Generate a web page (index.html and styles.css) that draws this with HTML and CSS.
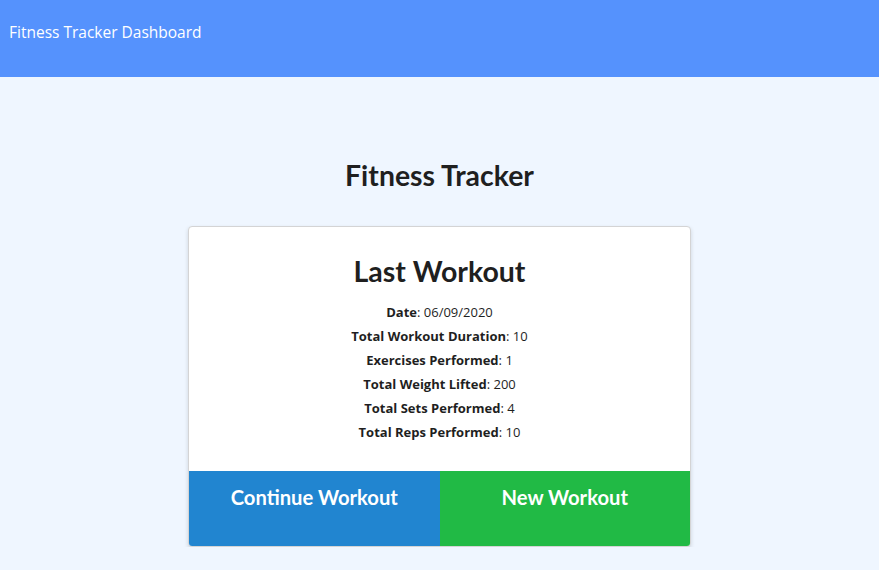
FILE: index.html
```html
<!DOCTYPE html>
<html lang="en">
<head>
<meta charset="utf-8">
<title>Fitness Tracker</title>
<link rel="stylesheet" href="styles.css">
</head>
<body>
<header class="navbar">Fitness Tracker Dashboard</header>
<main class="main">
  <h1 class="title">Fitness Tracker</h1>
  <section class="card">
    <div class="card-content">
      <h2 class="card-title">Last Workout</h2>
      <div class="stats">
        <p class="stat"><strong>Date</strong>: 06/09/2020</p>
        <p class="stat"><strong>Total Workout Duration</strong>: 10</p>
        <p class="stat"><strong>Exercises Performed</strong>: 1</p>
        <p class="stat"><strong>Total Weight Lifted</strong>: 200</p>
        <p class="stat"><strong>Total Sets Performed</strong>: 4</p>
        <p class="stat"><strong>Total Reps Performed</strong>: 10</p>
      </div>
    </div>
    <div class="buttons">
      <a class="btn btn-blue" href="#">Continue Workout</a>
      <a class="btn btn-green" href="#">New Workout</a>
    </div>
  </section>
</main>
</body>
</html>
```

FILE: styles.css
```css
html, body {
  margin: 0;
  padding: 0;
}
body {
  background: #eff6ff;
  font-family: Lato, "Open Sans", sans-serif;
  color: #1f1f1f;
}
.navbar {
  height: 77px;
  box-sizing: border-box;
  background: #5592fd;
  color: #ffffff;
  font-family: "Open Sans", "Noto Sans", sans-serif;
  font-size: 15.5px;
  line-height: 20px;
  padding: 22px 9px 0;
}
.main {
  display: flex;
  flex-direction: column;
  align-items: center;
}
.title {
  margin: 81px 0 34px;
  font-family: Lato, sans-serif;
  font-weight: 700;
  font-size: 28.4px;
  line-height: 34px;
  color: #1f1f1f;
}
.card {
  width: 503px;
  box-sizing: border-box;
  background: #ffffff;
  border: 1px solid #d4d4d5;
  border-radius: 4px;
  box-shadow: 0 2px 4px 0 rgba(0, 0, 0, 0.14);
  overflow: hidden;
}
.card-content {
  padding: 27px 16px 27px;
  text-align: center;
}
.card-title {
  margin: 0 0 12px;
  font-family: Lato, sans-serif;
  font-weight: 700;
  font-size: 28.5px;
  line-height: 34px;
  color: #1f1f1f;
}
.stats {
  display: flex;
  flex-direction: column;
}
.stat {
  margin: 0;
  font-family: "Open Sans", "Noto Sans", sans-serif;
  font-size: 13px;
  line-height: 24px;
  color: #1f1f1f;
}
.stat strong {
  font-weight: 700;
}
.buttons {
  display: grid;
  grid-template-columns: 1fr 1fr;
  height: 75px;
}
.btn {
  display: block;
  padding-top: 14px;
  text-align: center;
  text-decoration: none;
  color: #ffffff;
  font-family: Lato, sans-serif;
  font-weight: 700;
  font-size: 20.2px;
  line-height: 24px;
}
.btn-blue {
  background: #2185d0;
}
.btn-green {
  background: #21ba45;
}
```
